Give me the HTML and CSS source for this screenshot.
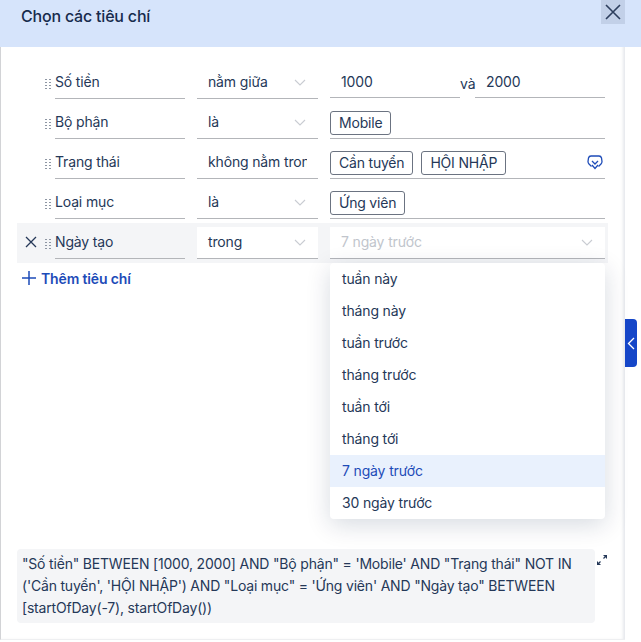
FILE: index.html
```html
<!DOCTYPE html>
<html lang="vi">

<head>
    <meta charset="UTF-8">
    <meta name="viewport" content="width=device-width, initial-scale=1.0">
    <title>Chọn các tiêu chí</title>
    <link rel="stylesheet" href="styles.css">
</head>

<body>
    <div class="dialog">
        <div class="header">
            <h1 class="title">Chọn các tiêu chí</h1>
            <div class="close">
                <svg width="18" height="18" viewBox="0 0 18 18"><path d="M2 2 16 16M16 2 2 16" /></svg>
            </div>
        </div>
        <div class="body">
            <div class="row">
                <span class="remove"></span>
                <span class="grip"></span>
                <div class="cell field">Số tiền</div>
                <div class="cell op">nằm giữa<svg class="chev" viewBox="0 0 12 7"><path d="M1 1 6 6 11 1" /></svg></div>
                <div class="value range">
                    <div class="cell num">1000</div>
                    <span class="and">và</span>
                    <div class="cell num">2000</div>
                </div>
            </div>
            <div class="row">
                <span class="remove"></span>
                <span class="grip"></span>
                <div class="cell field">Bộ phận</div>
                <div class="cell op">là<svg class="chev" viewBox="0 0 12 7"><path d="M1 1 6 6 11 1" /></svg></div>
                <div class="cell value tags"><span class="tag">Mobile</span></div>
            </div>
            <div class="row">
                <span class="remove"></span>
                <span class="grip"></span>
                <div class="cell field">Trạng thái</div>
                <div class="cell op"><span class="clip">không nằm trong</span></div>
                <div class="cell value tags">
                    <span class="tag">Cần tuyển</span>
                    <span class="tag">HỘI NHẬP</span>
                    <svg class="more" viewBox="0 0 16 15"><path d="M4.5 11.5 2 9Q1 8 1 6.5L1.5 3Q2 1 4 1H12Q14 1 14.5 3L15 6.5Q15 8 14 9L11.5 11.5" /><path d="M5 6 8 9 11 6M5 10 8 13.5 11 10" /></svg>
                </div>
            </div>
            <div class="row">
                <span class="remove"></span>
                <span class="grip"></span>
                <div class="cell field">Loại mục</div>
                <div class="cell op">là<svg class="chev" viewBox="0 0 12 7"><path d="M1 1 6 6 11 1" /></svg></div>
                <div class="cell value tags"><span class="tag">Ứng viên</span></div>
            </div>
            <div class="row active">
                <span class="remove"><svg width="12" height="12" viewBox="0 0 12 12"><path d="M1 1 11 11M11 1 1 11" /></svg></span>
                <span class="grip"></span>
                <div class="cell field">Ngày tạo</div>
                <div class="cell op white">trong<svg class="chev" viewBox="0 0 12 7"><path d="M1 1 6 6 11 1" /></svg></div>
                <div class="cell value white muted">7 ngày trước<svg class="chev" viewBox="0 0 12 7"><path d="M1 1 6 6 11 1" /></svg></div>
            </div>
            <div class="add">
                <svg width="14" height="14" viewBox="0 0 14 14"><path d="M7 0V14M0 7H14" /></svg>
                <span>Thêm tiêu chí</span>
            </div>
            <div class="menu-wrap">
                <ul class="menu">
                    <li>tuần này</li>
                    <li>tháng này</li>
                    <li>tuần trước</li>
                    <li>tháng trước</li>
                    <li>tuần tới</li>
                    <li>tháng tới</li>
                    <li class="selected">7 ngày trước</li>
                    <li>30 ngày trước</li>
                </ul>
            </div>
            <div class="query-row">
                <p class="query">"Số tiền" BETWEEN [1000, 2000] AND "Bộ phận" = 'Mobile' AND "Trạng thái" NOT IN ('Cần tuyển', 'HỘI NHẬP') AND "Loại mục" = 'Ứng viên' AND "Ngày tạo" BETWEEN [startOfDay(-7), startOfDay())</p>
                <svg class="expand" viewBox="0 0 12 12"><path d="M7 1H11V5Z" /><path d="M1 7V11H5Z" /><path class="thin" d="M9 3 7.5 4.5M3 9 4.5 7.5" /></svg>
            </div>
        </div>
    </div>
    <div class="side-tab">
        <svg width="8" height="13" viewBox="0 0 8 13"><path d="M7 1 1.5 6.5 7 12" /></svg>
    </div>
</body>

</html>
```

FILE: styles.css
```css
* {
    margin: 0;
    padding: 0;
    box-sizing: border-box;
}

li {
    list-style: none;
}

html,
body {
    height: 100%;
    overflow: hidden;
}

body {
    position: relative;
    background-color: #fff;
    color: #253858;
    font-family: Inter, "Noto Sans", sans-serif;
    font-size: 14px;
    letter-spacing: -0.15px;
}

.dialog {
    width: 625px;
    height: 640px;
    border-left: 1px solid #d2d3d6;
    border-bottom: 1px solid #eeeff1;
    background-color: #fff;
    box-shadow: inset -3px 0 3px -1px rgba(9, 30, 66, 0.1);
}

.header {
    display: flex;
    justify-content: space-between;
    height: 47px;
    margin-left: -1px;
    margin-right: -16px;
    padding-left: 21px;
    background-color: #d6e4fb;
}

.title {
    margin-top: 6px;
    font-size: 16px;
    line-height: 20px;
    font-weight: 500;
    letter-spacing: -0.2px;
    color: #172b4d;
}

.close {
    display: flex;
    align-items: center;
    justify-content: center;
    width: 24px;
    height: 24px;
    margin-right: 16px;
    background-color: #c2d0e8;
}

.close svg path {
    stroke: #2c3e5d;
    stroke-width: 1.6;
    fill: none;
}

.body {
    height: 592px;
    padding: 16px 0 0 16px;
    display: flex;
    flex-direction: column;
}

.row {
    display: flex;
    align-items: flex-start;
    height: 40px;
    width: 591px;
}

.row.active {
    background-color: #f4f5f7;
}

.remove {
    display: flex;
    align-items: center;
    justify-content: center;
    width: 27px;
    height: 38px;
    padding-left: 1px;
}

.remove svg path {
    stroke: #253858;
    stroke-width: 1.3;
    fill: none;
}

.grip {
    width: 8px;
    height: 12px;
    margin-top: 15px;
    margin-right: 3px;
    background-image: radial-gradient(circle, #8e96a3 0.8px, transparent 1.1px);
    background-size: 4px 3px;
}

.cell {
    display: flex;
    align-items: center;
    height: 32px;
    margin-top: 4px;
    padding-bottom: 2px;
    border-bottom: 1px solid #b3b5b9;
    line-height: 20px;
    white-space: nowrap;
}

.field {
    width: 130px;
    margin-right: 12px;
}

.op {
    width: 121px;
    margin-right: 12px;
    padding-left: 11px;
}

.clip {
    display: block;
    width: 99px;
    overflow: hidden;
}

.white {
    background-color: #fff;
}

.chev {
    width: 12px;
    height: 7px;
    margin-top: 2px;
    margin-left: auto;
    margin-right: 12px;
}

.chev path {
    stroke: #c9ccd2;
    stroke-width: 1.1;
    fill: none;
}

.value {
    width: 275px;
}

.range {
    display: flex;
}

.num {
    width: 130px;
    height: 31px;
    padding-bottom: 0;
    padding-left: 11px;
}

.and {
    width: 15px;
    margin-top: 5px;
    line-height: 31px;
    text-align: center;
}

.tags {
    gap: 8px;
    padding-bottom: 0;
}

.tag {
    height: 24px;
    padding: 0 8px;
    border: 1px solid #6b7381;
    border-radius: 3px;
    line-height: 22px;
    letter-spacing: -0.2px;
}

.more {
    width: 16px;
    height: 15px;
    margin-left: auto;
    margin-right: 2px;
}

.more path {
    stroke: #1d4bb8;
    stroke-width: 1.3;
    fill: none;
}

.muted {
    padding-left: 11px;
    color: #c1c5cc;
}

.add {
    display: flex;
    align-items: center;
    gap: 5px;
    height: 30px;
    padding-left: 5px;
    color: #1d4bb8;
    font-weight: 600;
}

.add svg path {
    stroke: #1d4bb8;
    stroke-width: 1.5;
    fill: none;
}

/* dropdown sits over the dialog, out of the flow */
.menu-wrap {
    position: relative;
    height: 0;
}

.menu {
    position: absolute;
    left: 313px;
    top: -30px;
    width: 275px;
    height: 256px;
    border-radius: 4px;
    background-color: #fff;
    box-shadow: 0 6px 24px rgba(9, 30, 66, 0.16);
    overflow: hidden;
}

.menu li {
    height: 32px;
    padding-left: 12px;
    line-height: 32px;
}

.menu li.selected {
    background-color: #e9f1fd;
    color: #1d4bb8;
}

.query-row {
    display: flex;
    align-items: flex-start;
    margin-top: 256px;
}

.query {
    width: 578px;
    height: 74px;
    padding: 4px 5px;
    border-radius: 4px;
    background-color: #f4f5f7;
    line-height: 22px;
    letter-spacing: -0.19px;
}

.expand {
    width: 12px;
    height: 12px;
    margin-left: 1px;
    margin-top: 5px;
}

.expand path {
    fill: #253858;
}

.expand .thin {
    fill: none;
    stroke: #253858;
    stroke-width: 1.2;
}

.side-tab {
    position: absolute;
    left: 625px;
    top: 319px;
    display: flex;
    align-items: center;
    justify-content: center;
    width: 12px;
    height: 48px;
    border-radius: 0 4px 4px 0;
    background-color: #1546c8;
}

.side-tab svg path {
    stroke: #fff;
    stroke-width: 1.3;
    fill: none;
}
```
